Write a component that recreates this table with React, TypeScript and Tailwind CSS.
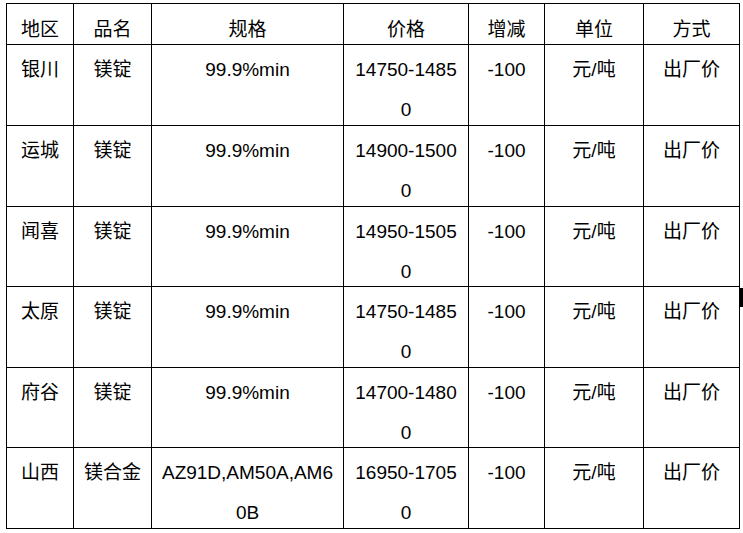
const headers = ['地区', '品名', '规格', '价格', '增减', '单位', '方式'];

const rows = [
  { region: '银川', name: '镁锭', spec: '99.9%min', price: '14750-14850', h: 'h-[81px]' },
  { region: '运城', name: '镁锭', spec: '99.9%min', price: '14900-15000', h: 'h-[81px]' },
  { region: '闻喜', name: '镁锭', spec: '99.9%min', price: '14950-15050', h: 'h-[80px]' },
  { region: '太原', name: '镁锭', spec: '99.9%min', price: '14750-14850', h: 'h-[81px]' },
  { region: '府谷', name: '镁锭', spec: '99.9%min', price: '14700-14800', h: 'h-[80px]' },
  { region: '山西', name: '镁合金', spec: 'AZ91D,AM50A,AM60B', price: '16950-17050', h: 'h-[81px]' },
];

const cell = 'border-r border-b border-black px-[7px] pt-[5px] leading-[40px] text-center break-all overflow-visible';

export default function App() {
  return (
    <div
      className="relative w-[743px] h-[533px] bg-white text-black text-[19px] pt-[3px] pl-[6px]"
      style={{ fontFamily: '"Liberation Sans", "Noto Sans CJK SC", sans-serif' }}
    >
      <div className="grid grid-cols-[67px_78px_192px_125px_76px_99px_96px] w-[734px] border-l border-t border-black">
        {headers.map((h) => (
          <div key={h} className={`${cell} h-[41px] pt-[6px]`}>
            {h}
          </div>
        ))}
        {rows.map((r, i) => (
          <div key={i} className="contents">
            <div className={`${cell} ${r.h}`}>{r.region}</div>
            <div className={`${cell} ${r.h}`}>{r.name}</div>
            <div className={`${cell} ${r.h}`}>{r.spec}</div>
            <div className={`${cell} ${r.h}`}>{r.price}</div>
            <div className={`${cell} ${r.h}`}>-100</div>
            <div className={`${cell} ${r.h}`}>元/吨</div>
            <div className={`${cell} ${r.h}`}>出厂价</div>
          </div>
        ))}
      </div>
      {/* caret-like mark on the right edge */}
      <div className="absolute left-[740px] top-[288px] w-[3px] h-[19px] bg-black" />
    </div>
  );
}
